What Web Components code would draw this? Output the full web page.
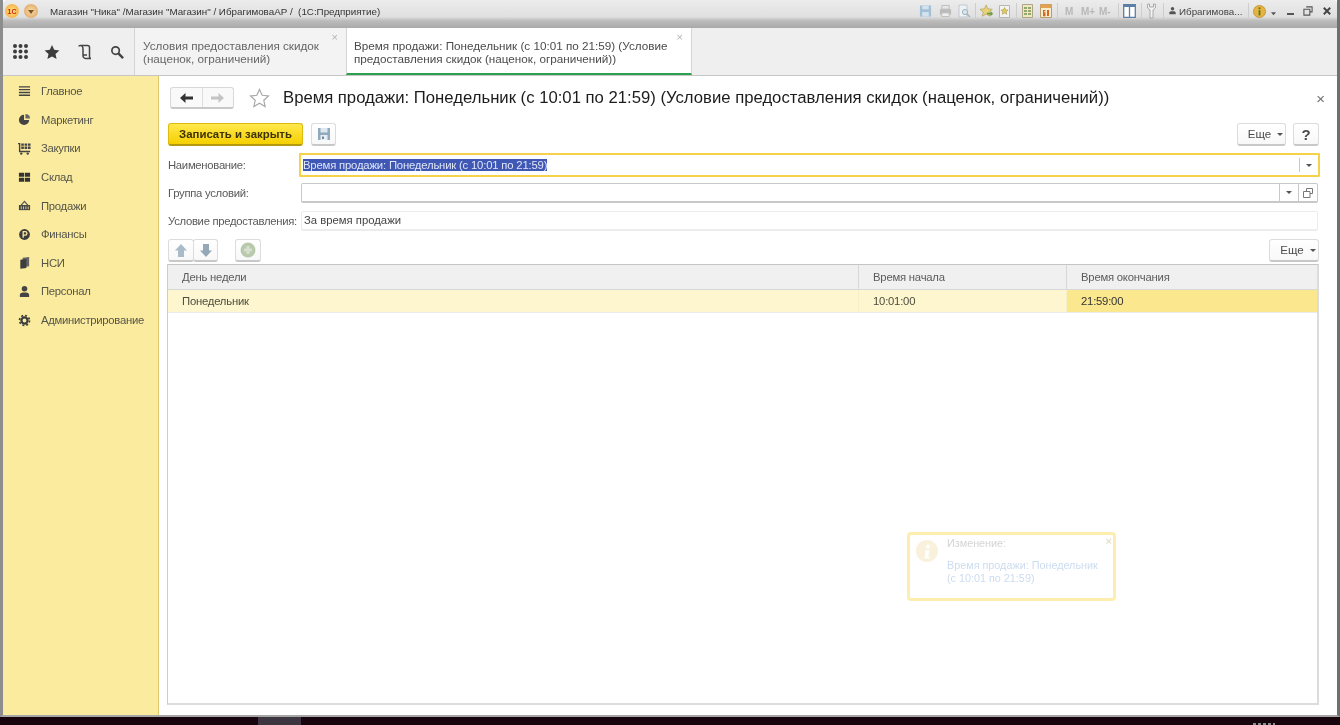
<!DOCTYPE html>
<html lang="ru">
<head>
<meta charset="UTF-8" />
<title>1С:Предприятие</title>
<style>
  html, body { margin: 0; height: 100%; background: #17040d; overflow: hidden; }
  body { font: 11px "Liberation Sans", Arial, sans-serif; color: #4b4b4b; }
</style>
<script>
  // small helper: every element gets its own open shadow root.
  // Markup goes in on connect, the parser has not set attributes yet in the constructor
  const el = (name, css, html) =>
    customElements.define(name, class extends HTMLElement {
      constructor() {
        super();
        this.attachShadow({ mode: "open" });
      }
      connectedCallback() {
        if (this.shadowRoot.firstChild) return;
        this.shadowRoot.innerHTML = `<style>${css}</style>${typeof html === "function" ? html(this) : html}`;
      }
    });

  const ICONS = {
    menu: `<path d="M1 2h12M1 5h12M1 8h12M1 11h12" stroke="#444" stroke-width="1.5"/>`,
    chart: `<path d="M6.500 2a5.500 5.500 0 1 0 5.500 5.500H6.500z" fill="#444"/><path d="M8 1a5 5 0 0 1 5 5H8z" fill="#666"/>`,
    cart: `<path d="M0 1h2.500v8.500H13V11H1V2.500H0z" fill="#444"/><path d="M3.500 1.500h2.800v2.600H3.500zM7.100 1.500h2.800v2.600H7.100zM10.700 1.500h2.800v2.600h-2.800zM3.500 4.900h2.800v2.600H3.500zM7.100 4.900h2.800v2.600H7.100zM10.700 4.900h2.800v2.600h-2.800z" fill="#444"/><circle cx="3.500" cy="12.500" r="1.300" fill="#444"/><circle cx="10.500" cy="12.500" r="1.300" fill="#444"/>`,
    grid: `<path d="M1 2h5.600v4.300H1zM7.400 2H13v4.300H7.400zM1 7.300h5.600v4.300H1zM7.400 7.300H13v4.300H7.400z" fill="#333"/>`,
    basket: `<path d="M1 6.500h12V12H1z" fill="#444"/><path d="M3.500 6.500 7 2.500l3.500 4" fill="none" stroke="#555" stroke-width="1.300"/><path d="M3.500 8v3M6 8v3M8.500 8v3M11 8v3" stroke="#fbeb9e" stroke-width=".9"/>`,
    coin: `<circle cx="7" cy="7" r="5.800" fill="#3d3d3d"/><path d="M5.600 10.500V4h2.200a1.800 1.800 0 0 1 0 3.600H5.600" fill="none" stroke="#fbeb9e" stroke-width="1.400"/>`,
    docs: `<path d="M5 2 12 1v10l-7 1z" fill="#666"/><path d="M2.500 4 9 3.200V13l-6.500.8z" fill="#3d3d3d"/>`,
    person: `<circle cx="7" cy="4" r="3" fill="#444"/><path d="M2 13v-2.500C2 8.500 4 8 7 8s5 .5 5 2.500V13z" fill="#444"/>`,
    gear: `<circle cx="7" cy="7" r="3.300" fill="none" stroke="#3d3d3d" stroke-width="2.400"/><circle cx="7" cy="7" r="5.400" fill="none" stroke="#3d3d3d" stroke-width="1.800" stroke-dasharray="2.100 2.140"/>`,
  };

  el("nav-item", `
    :host { display: flex; align-items: center; height: 28.6px; color: #55554a; font-size: 11.300px; letter-spacing: -.28px; }
    svg { width: 13px; height: 13px; margin: 0 10px 0 14px; flex: none; }
  `, (h) => `<svg viewBox="0 0 14 14">${ICONS[h.getAttribute("icon")]}</svg><slot></slot>`);

  el("side-nav", `
    :host { display: block; width: 156px; background: #fbeb9e; border-right: 1px solid #dcc96e; padding-top: 1px; flex: none; box-sizing: border-box; padding-left: 1px; }
  `, `<slot></slot>`);

  el("title-bar", `
    :host { display: flex; align-items: center; height: 28px; flex: none; padding: 0 6px 6px 2px; box-sizing: border-box;
      background: linear-gradient(#ececec 0, #e0e0e0 60%, #bcbcbc 74%, #a9a9a9 100%); font-size: 9.800px; color: #333; border-radius: 4px 4px 0 0; }
    .orb { width: 14px; height: 14px; border-radius: 50%; flex: none; display: flex; align-items: center; justify-content: center; }
    .logo { background: radial-gradient(#ffe27a, #f2a33a); color: #c8251b; font: bold 7px "Liberation Sans", sans-serif; }
    .menu { background: radial-gradient(#f8dfb0, #dc9a4f); margin-left: 5px; }
    .menu i { border: 3px solid transparent; border-top: 4px solid #7a5528; margin-top: 4px; }
    .name { margin-left: 12px; flex: 1; white-space: pre; }
    .tools { display: flex; align-items: center; flex: none; }
    .tools > * { flex: none; display: block; }
    .sep { width: 1px; height: 17px; background: #cdcdcd; }
    .mem { font: bold 10px "Liberation Sans", sans-serif; color: #b8b8b8; white-space: nowrap; }
    .user { color: #444; font-size: 9.800px; width: 64px; white-space: nowrap; }
  `, `
    <span class="orb logo">1С</span><span class="orb menu"><i></i></span>
    <span class="name">Магазин "Ника" /Магазин "Магазин" / ИбрагимоваАР /  (1С:Предприятие)</span>
    <div class="tools">
      <svg width="13" height="14" viewBox="0 0 14 14"><path d="M1 1h12v12H1z" fill="#a3bfd6"/><path d="M3.500 1h7v4h-7zM3.500 8h7v5h-7z" fill="#d5e2ec"/></svg>
      <svg width="13" height="14" viewBox="0 0 14 14" style="margin-left:7px"><path d="M3 1h8v4H3z" fill="#e6e6e6" stroke="#bbb"/><path d="M1 5h12v6H1z" fill="#bbb"/><path d="M3 9h8v4H3z" fill="#eee" stroke="#bbb"/></svg>
      <svg width="14" height="14" viewBox="0 0 14 14" style="margin-left:5px"><path d="M2 1h8v12H2z" fill="#eef2f5" stroke="#c0c8d0"/><circle cx="8" cy="8" r="2.600" fill="#dbe7ee" stroke="#9fb2bf"/><path d="m10 10 3 3" stroke="#9fb2bf" stroke-width="1.400"/></svg>
      <span class="sep" style="margin-left:4px"></span>
      <svg width="14" height="14" viewBox="0 0 16 16" style="margin-left:4px"><path d="m7 1 2 4.500 5 .5-3.700 3.300L11.400 14 7 11.500 2.600 14l1.100-4.700L0 6l5-.5z" fill="#e8d277" stroke="#a39046" stroke-width=".6"/><path d="M8 10h4V8l3 3-3 3v-2H8z" fill="#6f9a3c"/></svg>
      <svg width="11" height="13" viewBox="0 0 11 13" style="margin-left:5px"><path d="M.5 .5h10v12H.5z" fill="#f3f3f3" stroke="#b6b6b6"/><path d="m5.500 2.500 1.100 2.300 2.500.3-1.900 1.700.5 2.500-2.200-1.300-2.200 1.300.5-2.500-1.900-1.700 2.500-.3z" fill="#e2c860" stroke="#a39046" stroke-width=".5"/></svg>
      <span class="sep" style="margin-left:6px"></span>
      <svg width="11" height="14" viewBox="0 0 11 14" style="margin-left:5px"><path d="M.5 .5h10v13H.5z" fill="#f0e7c4" stroke="#b0a582"/><path d="M2 3h3v2H2zM6 3h3v2H6zM2 6h3v2H2zM6 6h3v2H6zM2 9h3v2H2zM6 9h3v2H6z" fill="#93a86a"/></svg>
      <svg width="12" height="14" viewBox="0 0 12 14" style="margin-left:7px"><path d="M.5 .5h11v13H.5z" fill="#f8ecd0" stroke="#b89c6a"/><path d="M.5 .5h11V4H.5z" fill="#e4a14f"/><path d="M3 6h2.500v1.200H4v1h1.500v4H3zM7 6h2v6H7z" fill="#d2691e"/></svg>
      <span class="sep" style="margin-left:5px"></span>
      <span class="mem" style="margin-left:7px;width:9px">M</span>
      <span class="mem" style="margin-left:7px;width:13px">M+</span>
      <span class="mem" style="margin-left:5px;width:14px">M-</span>
      <span class="sep" style="margin-left:5px"></span>
      <svg width="13" height="14" viewBox="0 0 13 14" style="margin-left:4px"><path d="M.7 .7h11.600v12.600H.7z" fill="#fff" stroke="#5b7fa6" stroke-width="1.300"/><path d="M.7 .7h11.600V3H.7z" fill="#5b7fa6"/><path d="M6.500 2v11" stroke="#5b7fa6" stroke-width="1.300"/></svg>
      <span class="sep" style="margin-left:5px"></span>
      <svg width="9" height="16" viewBox="0 0 9 16" style="margin-left:5px"><path d="M.6 1v4l2.400 2v8h3V7l2.400-2V1L6.500 1v3h-4V1z" fill="#f2f2f2" stroke="#9a9a9a" stroke-width=".8"/></svg>
      <span class="sep" style="margin-left:7px"></span>
      <svg width="9" height="10" viewBox="0 0 14 14" style="margin-left:4px"><circle cx="7" cy="3.600" r="2.700" fill="#555"/><path d="M2 12v-2.200C2 8 4 7.400 7 7.400s5 .6 5 2.400V12z" fill="#555"/></svg>
      <span class="user" style="margin-left:2px">Ибрагимова...</span>
      <span class="sep" style="margin-left:5px"></span>
      <svg width="13" height="13" viewBox="0 0 15 15" style="margin-left:4px"><circle cx="7.500" cy="7.500" r="7" fill="#e8b23e" stroke="#b68726" stroke-width=".8"/><circle cx="7.500" cy="3.800" r="1.200" fill="#3d7d2c"/><path d="M6.500 6h2v6h-2z" fill="#3d7d2c"/></svg>
      <svg width="5" height="4" viewBox="0 0 6 4" style="margin:5px 0 0 5px"><path d="M0 0h6L3 3.500z" fill="#555"/></svg>
      <svg width="7" height="8" viewBox="0 0 7 8" style="margin-left:11px"><path d="M0 6h7v2H0z" fill="#555"/></svg>
      <svg width="10" height="10" viewBox="0 0 11 11" style="margin-left:9px"><path d="M3.500 1h6.500v5.500H8M1 3.500h6.500V10H1z" fill="none" stroke="#555" stroke-width="1.200"/></svg>
      <svg width="8" height="8" viewBox="0 0 10 10" style="margin-left:10px"><path d="m1 1 8 8M9 1 1 9" stroke="#444" stroke-width="2.400"/></svg>
    </div>
  `);

  el("section-tab", `
    :host { display: block; height: 47px; box-sizing: border-box; position: relative; padding: 11px 7px 0 8px; line-height: 13px; color: #666; font-size: 11.700px; white-space: nowrap;
      background: #f3f3f3; border-left: 1px solid #d4d4d4; border-right: 1px solid #d4d4d4; }
    :host([active]) { background: #fff; color: #4b4b4b; border-bottom: 2px solid #2da04e; padding-left: 7px; }
    .x { position: absolute; top: 3px; right: 8px; color: #b4b4b4; font-size: 11px; }
  `, `<slot></slot><span class="x">×</span>`);

  el("top-panel", `
    :host { display: flex; height: 48px; flex: none; background: #efefef; border-bottom: 1px solid #c6c6c6; box-sizing: border-box; }
    .btns { width: 131px; flex: none; display: flex; align-items: center; padding-left: 10px; box-sizing: border-box; }
    .btns svg { flex: none; }
    ::slotted(section-tab:first-of-type) { width: 213px; }
    ::slotted(section-tab:last-of-type) { width: 346px; margin-left: -1px; }
  `, `
    <div class="btns">
      <svg width="15" height="15" viewBox="0 0 15 15" fill="#3d3d3d"><circle cx="2" cy="2" r="2"/><circle cx="7.500" cy="2" r="2"/><circle cx="13" cy="2" r="2"/><circle cx="2" cy="7.500" r="2"/><circle cx="7.500" cy="7.500" r="2"/><circle cx="13" cy="7.500" r="2"/><circle cx="2" cy="13" r="2"/><circle cx="7.500" cy="13" r="2"/><circle cx="13" cy="13" r="2"/></svg>
      <svg width="16" height="16" viewBox="0 0 16 16" style="margin-left:16px"><path d="m8 1 2.200 4.800 5.200.6-3.900 3.500L12.600 15 8 12.400 3.400 15l1.100-5.100L.6 6.400l5.200-.6z" fill="#3d3d3d"/></svg>
      <svg width="16" height="16" viewBox="0 0 16 16" style="margin-left:17px" fill="none" stroke="#444" stroke-width="1.500"><path d="M2 2.500C2 1.300 4 1 5 2c1 1 1 2 1 3v7c0 1 1 2.500 2.500 2.500H14c-1 0-1.500-1-1.500-2V3.500c0-1-.5-2-2-2H4M6 11h4"/></svg>
      <svg width="14" height="14" viewBox="0 0 15 15" style="margin-left:17px" fill="none" stroke="#444"><circle cx="6" cy="6" r="4" stroke-width="1.800"/><path d="m9 9 5 5" stroke-width="2.600"/></svg>
    </div>
    <slot></slot>
  `);

  el("ui-button", `
    :host { display: inline-flex; align-items: center; justify-content: center; box-sizing: border-box; height: 23px; color: #4b4b4b; font-size: 11.500px;
      background: linear-gradient(#fff, #f8f8f8); border: 1px solid #dcdcdc; border-bottom: 2px solid #c8c8c8; border-radius: 3px; flex: none; }
    :host([primary]) { background: linear-gradient(#ffe84d, #f5d000); border-color: #dcbc10; border-bottom-color: #b39a10; color: #3d3300; font-weight: bold; font-size: 11.400px; }
  `, `<slot></slot>`);

  el("form-field", `
    :host { display: flex; align-items: center; }
    label { width: 133px; flex: none; color: #5a5a5a; white-space: nowrap; font-size: 11.300px; letter-spacing: -.29px; }
    .box { flex: 1; display: flex; align-items: stretch; box-sizing: border-box; height: 20px; border: 1px solid #c8c8c8; border-bottom-width: 2px; border-radius: 2px; background: #fff; overflow: hidden; margin-right: 2px; }
    :host([focused]) .box { height: 24px; margin: 0 0 0 -2px; border: 2px solid #f6d24a; border-radius: 1px; }
    :host([plain]) .box { border: 1px solid #ececec; border-bottom-width: 2px; }
    .val { flex: 1; padding: 0 2px; line-height: 17px; color: #444; white-space: nowrap; font-size: 11.300px; }
    :host([focused]) .val { line-height: 20px; padding-left: 2px; letter-spacing: -.18px; }
    ::slotted(mark) { background: #3f57b5; color: #dfe6f7; }
    .act { width: 18px; flex: none; border-left: 1px solid #c8c8c8; display: flex; align-items: center; justify-content: center; }
    :host([focused]) .act { margin: 3px 0; width: 18px; }
    .act i { border: 3px solid transparent; border-top: 3px solid #555; margin-top: 3px; }
    .act svg { display: block; }
  `, (h) => `
    <label>${h.getAttribute("label")}</label>
    <div class="box">
      <div class="val"><slot></slot></div>
      ${h.hasAttribute("drop") ? `<div class="act"><i></i></div>` : ""}
      ${h.hasAttribute("open") ? `<div class="act"><svg width="10" height="10" viewBox="0 0 10 10" fill="none" stroke="#777"><path d="M3.500 3V.5h6v5H7M.5 3.500h6.500v6H.5z"/></svg></div>` : ""}
    </div>
  `);

  el("data-table", `
    :host { display: flex; flex-direction: column; flex: 1; border: 2px solid #dcdcdc; border-width: 1px 2px 2px 1px; box-sizing: border-box; min-height: 0; border-top-color: #c4c4c4; border-left-color: #cccccc; font-size: 11.300px; letter-spacing: -.22px; }
    .head, .row { display: grid; grid-template-columns: 691px 208px 1fr; }
    .head { height: 25px; background: #f0f0f0; border-bottom: 1px solid #d8d8d8; box-sizing: border-box; color: #5c5c5c; }
    .row { height: 23px; border-bottom: 1px solid #ececec; box-sizing: border-box; background: #fdf6cf; color: #4e4e3e; }
    .head span, .row span { display: flex; align-items: center; padding-left: 14px; border-right: 1px solid #d8d8d8; box-sizing: border-box; }
    .row span { border-right-color: #f6efc8; }
    .row span:last-child { background: #fbe88e; color: #333; border: 0; }
    .head span:last-child { border: 0; }
  `, `
    <div class="head"><span>День недели</span><span>Время начала</span><span>Время окончания</span></div>
    <div class="row"><span>Понедельник</span><span>10:01:00</span><span>21:59:00</span></div>
  `);

  el("toast-note", `
    :host { position: absolute; left: 748px; top: 456px; width: 209px; height: 69px; box-sizing: border-box; border: 3px solid #fdeeb0; border-radius: 4px; background: #fff; font-size: 10.800px; color: #d4d4d4; }
    svg { position: absolute; left: 6px; top: 5px; }
    .cap { position: absolute; left: 37px; top: 2px; }
    .txt { position: absolute; left: 37px; top: 24px; line-height: 13px; color: #ccdcf0; white-space: nowrap; }
    .x { position: absolute; right: 1px; top: 0; color: #e6e2cc; font-weight: bold; font-size: 11px; }
  `, `
    <svg width="22" height="22" viewBox="0 0 22 22"><circle cx="11" cy="11" r="11" fill="#f9f1dc"/><circle cx="12" cy="6.500" r="2" fill="#fff"/><path d="M9 10h4.500l-1 7H14v1.500H8.500l1-7H9z" fill="#fff"/></svg>
    <span class="cap">Изменение:</span>
    <span class="txt">Время продажи: Понедельник<br>(с 10:01 по 21:59)</span>
    <span class="x">×</span>
  `);

  el("form-page", `
    :host { display: flex; flex-direction: column; flex: 1; min-width: 0; background: #fff; position: relative; box-sizing: border-box; padding: 11px 17px 10px 9px; font-size: 11px; }
    .head { display: flex; align-items: center; height: 22px; padding-left: 2px; }
    .nav { display: flex; width: 64px; height: 22px; box-sizing: border-box; border: 1px solid #d8d8d8; border-bottom: 2px solid #c8c8c8; border-radius: 3px; background: #f9f9f9; }
    .nav span { flex: 1; display: flex; align-items: center; justify-content: center; }
    .nav span + span { border-left: 1px solid #dedede; }
    .star { margin: 0 13px 0 15px; }
    h1 { margin: 0; font: 16.700px "Liberation Sans", Arial, sans-serif; color: #1c1c1c; white-space: nowrap; flex: 1; }
    .close { color: #707070; font-size: 15px; margin-right: -5px; line-height: 15px; }
    .bar { display: flex; align-items: center; height: 23px; }
    .grow { flex: 1; }
    .more { padding-left: 8px; }
    .fields { display: flex; flex-direction: column; margin-top: 7px; }
    .group { display: flex; }
    .group ui-button + ui-button { margin-left: -1px; }
    .tail { border: 3px solid transparent; border-top: 3px solid #555; margin: 3px 0 0 6px; }
    .table { flex: 1; display: flex; margin: 2px 1px 0 -1px; min-height: 0; }
  `, `
    <div class="head">
      <div class="nav">
        <span><svg width="13" height="10" viewBox="0 0 13 10"><path d="M5.500 0v3.500H13v3H5.500V10L0 5z" fill="#333"/></svg></span>
        <span><svg width="13" height="10" viewBox="0 0 13 10"><path d="M7.500 0v3.500H0v3h7.500V10L13 5z" fill="#c4c4c4"/></svg></span>
      </div>
      <svg class="star" width="21" height="20" viewBox="0 0 21 20"><path d="m10.500 1.500 2.700 5.800 6.300.7-4.700 4.300 1.300 6.200-5.600-3.200-5.600 3.200 1.300-6.200L1.500 8l6.300-.7z" fill="#fff" stroke="#a8a8a8" stroke-width="1.200"/></svg>
      <h1>Время продажи: Понедельник (с 10:01 по 21:59) (Условие предоставления скидок (наценок, ограничений))</h1>
      <span class="close">×</span>
    </div>
    <div class="bar" style="margin-top:14px">
      <ui-button primary style="width:135px">Записать и закрыть</ui-button>
      <ui-button style="width:25px;margin-left:8px"><svg width="14" height="14" viewBox="0 0 14 14"><path d="M1 1h12v12H1z" fill="#8fa9bd"/><path d="M3.500 1h7v4.500h-7z" fill="#dfe8ef"/><path d="M3.500 8h7v5h-7z" fill="#e8eef3"/><path d="M5 9.500h2v2.500H5z" fill="#76899a"/></svg></ui-button>
      <div class="grow"></div>
      <ui-button class="more" style="width:49px">Еще<span class="tail"></span></ui-button>
      <ui-button style="width:26px;margin:0 1px 0 7px;font-weight:bold;font-size:15px">?</ui-button>
    </div>
    <div class="fields">
      <form-field label="Наименование:" focused drop><mark>Время продажи: Понедельник (с 10:01 по 21:59)</mark></form-field>
      <form-field label="Группа условий:" drop open style="margin-top:6px"></form-field>
      <form-field label="Условие предоставления:" plain style="margin-top:8px">За время продажи</form-field>
    </div>
    <div class="bar" style="margin-top:8px">
      <div class="group">
        <ui-button style="width:26px"><svg width="12" height="13" viewBox="0 0 12 13"><path d="M6 0l6 6.500H9V13H3V6.500H0z" fill="#a9bcc8"/></svg></ui-button>
        <ui-button style="width:25px"><svg width="12" height="13" viewBox="0 0 12 13"><path d="M6 13 0 6.500h3V0h6v6.500h3z" fill="#94a8b5"/></svg></ui-button>
      </div>
      <ui-button style="width:26px;margin-left:17px"><svg width="16" height="16" viewBox="0 0 16 16"><circle cx="8" cy="8" r="7.500" fill="#b9c9ac"/><path d="M6.500 4h3v2.500H12v3H9.500V12h-3V9.500H4v-3h2.500z" fill="#d6e0cc"/></svg></ui-button>
      <div class="grow"></div>
      <ui-button class="more" style="width:50px;margin-right:1px">Еще<span class="tail"></span></ui-button>
    </div>
    <div class="table"><slot></slot></div>
    <toast-note></toast-note>
  `);

  el("app-window", `
    :host { display: flex; flex-direction: column; height: 717px; box-sizing: border-box; background: #fff; border: 3px solid #a6a6a6; border-width: 0 3px 2px 3px; border-left-color: #8d8d8d; border-right-color: #6f6f6f; filter: blur(.3px); }
    .body { display: flex; flex: 1; min-height: 0; }
  `, `<slot name="title"></slot><slot name="panel"></slot><div class="body"><slot></slot></div>`);

  el("task-bar", `
    :host { display: flex; height: 8px; background: #17040d; }
    i { margin-left: 258px; width: 43px; background: #3d3540; }
    b { margin: 6px 0 0 952px; width: 22px; height: 2px; background: repeating-linear-gradient(90deg, #8d8a8c 0 3px, transparent 3px 5px); }
  `, `<i></i><b></b>`);
</script>
</head>
<body>
  <app-window>
    <title-bar slot="title"></title-bar>
    <top-panel slot="panel">
      <section-tab>Условия предоставления скидок<br>(наценок, ограничений)</section-tab>
      <section-tab active>Время продажи: Понедельник (с 10:01 по 21:59) (Условие<br>предоставления скидок (наценок, ограничений))</section-tab>
    </top-panel>
    <side-nav>
      <nav-item icon="menu">Главное</nav-item>
      <nav-item icon="chart">Маркетинг</nav-item>
      <nav-item icon="cart">Закупки</nav-item>
      <nav-item icon="grid">Склад</nav-item>
      <nav-item icon="basket">Продажи</nav-item>
      <nav-item icon="coin">Финансы</nav-item>
      <nav-item icon="docs">НСИ</nav-item>
      <nav-item icon="person">Персонал</nav-item>
      <nav-item icon="gear">Администрирование</nav-item>
    </side-nav>
    <form-page><data-table></data-table></form-page>
  </app-window>
  <task-bar></task-bar>
</body>
</html>
